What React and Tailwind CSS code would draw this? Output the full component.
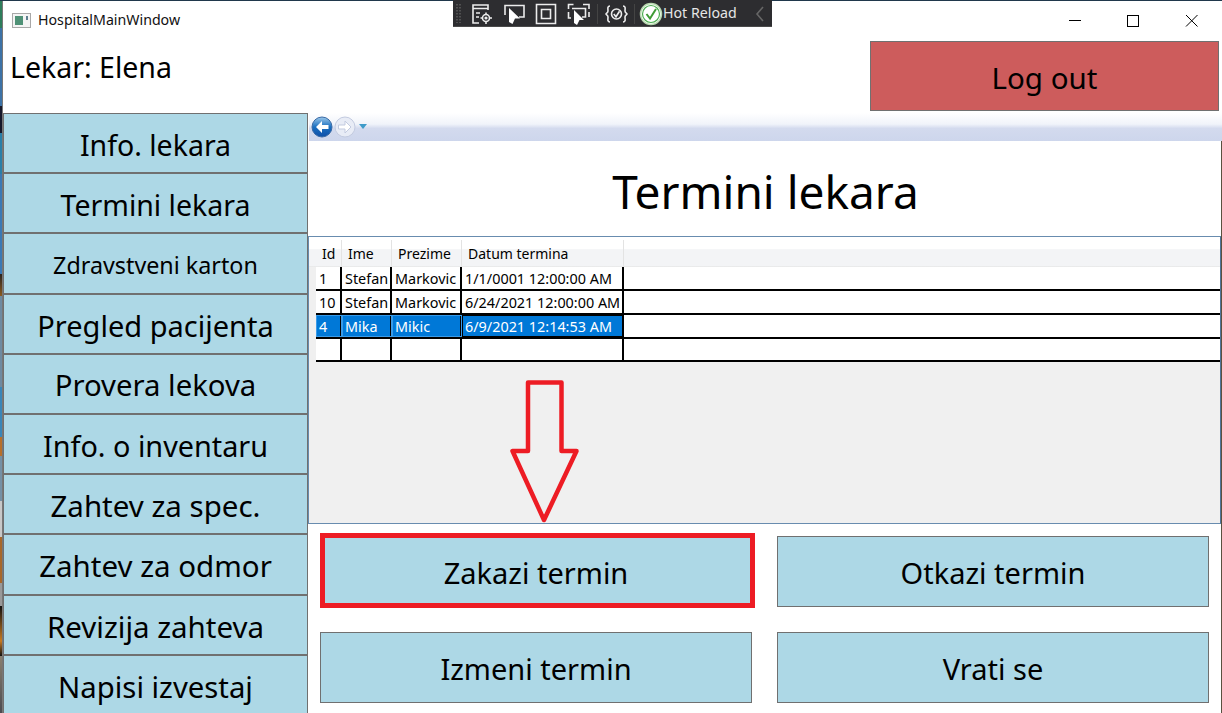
const FONT = "font-['Noto_Sans',sans-serif]";

const sideItems = [
  ["Info. lekara", "text-[28.5px]", "h-[59px]"],
  ["Termini lekara", "text-[28.500px]", "h-[60px]"],
  ["Zdravstveni karton", "text-[23.300px]", "h-[61px]"],
  ["Pregled pacijenta", "text-[29px]", "h-[60px]"],
  ["Provera lekova", "text-[29.300px]", "h-[60px]"],
  ["Info. o inventaru", "text-[28.800px]", "h-[60px]"],
  ["Zahtev za spec.", "text-[29.500px]", "h-[60px]"],
  ["Zahtev za odmor", "text-[29.500px]", "h-[61px]"],
  ["Revizija zahteva", "text-[29.500px]", "h-[60px]"],
  ["Napisi izvestaj", "text-[29.300px]", "h-[62px]"],
];

const rows = [
  ["1", "Stefan", "Markovic", "1/1/0001 12:00:00 AM"],
  ["10", "Stefan", "Markovic", "6/24/2021 12:00:00 AM"],
  ["4", "Mika", "Mikic", "6/9/2021 12:14:53 AM", true],
  ["", "", "", ""],
];

const colW = ["w-[26px]", "w-[50px]", "w-[70px]", "w-[162px]"];

function Toolbar() {
  return (
    <div className="absolute left-[453px] top-0 w-[319px] h-[27px] bg-[#2d2d30] border-b border-[#4a4a4a] flex items-center text-[#e6e6e6]">
      <svg width="319" height="27" viewBox="0 0 319 27" className="absolute left-0 top-0" fill="none" stroke="#ececec" strokeWidth="1.600">
        <path d="M4 4v19M7 4v19" stroke="#5c5c5c" strokeWidth="1.500" strokeDasharray="1.500 1.500" />
        <path d="M20 13V5h15v5M20 8.500h15M20 13v10h6M23 13h4M23 17h3" />
        <circle cx="33" cy="18" r="3.500" /><circle cx="33" cy="18" r="0.800" fill="#ececec" />
        <path d="M33 12.500v2M33 21.500v2.500M27.500 18h2M36.500 18h2.500" />
        <path d="M52 15V5.500h19V17h-5" />
        <path d="M56 8L67 18.500H62L59.500 24L56 22Z" fill="#fff" stroke="none" />
        <path d="M83.500 4.500h19v19h-19z" /><path d="M88.500 9.500h9v9h-9z" />
        <path d="M115.500 9V4.500h5M130 4.500h6V9M115.500 12v6h2.500M136 12v5" />
        <path d="M119 8.500h13.500V17H129" />
        <path d="M121 10L131 20H126.500L124 25L121 23Z" fill="#fff" stroke="none" />
        <path d="M144.500 4v20M181.500 4v20" stroke="#444" strokeWidth="1" />
        <path d="M157 6c-3 0-2 3-2 5s-2 2-2 3 2 1 2 3-1 5 2 5M170 6c3 0 2 3 2 5s2 2 2 3-2 1-2 3 1 5-2 5" />
        <circle cx="163.500" cy="14" r="5" />
        <path d="M160.800 14l2.200 2.800 3.500-5.500" />
        <path d="M310 7l-6 7 6 7" stroke="#666" />
      </svg>
      <svg width="24" height="24" viewBox="0 0 24 24" className="absolute left-[186px] top-[2px]">
        <circle cx="12" cy="12" r="10.500" fill="#fff" stroke="#b9d9b0" strokeWidth="1.500" />
        <circle cx="12" cy="12" r="8.500" fill="#fff" stroke="#4caf50" strokeWidth="1.200" />
        <path d="M7.500 12l3.500 4.500 6-9.500" fill="none" stroke="#3f9b35" strokeWidth="2" />
      </svg>
      <span className="absolute left-[210px] top-[3px] text-[14.200px] leading-[20px] whitespace-nowrap">Hot Reload</span>
    </div>
  );
}

function ActionButton({ children }) {
  return (
    <button className="w-[432px] h-[71px] pt-[2px] bg-[#add8e6] border border-[#707070] text-[29px] text-black flex items-center justify-center">
      {children}
    </button>
  );
}

export default function App() {
  return (
    <div className={`${FONT} relative w-[1222px] h-[713px] overflow-hidden bg-white text-black flex flex-col`}>
      <div className="h-px bg-[#20384c] shrink-0" />
      <div className="flex flex-1 min-h-0">
        <div className="w-[3px] shrink-0 border-r border-[#777] bg-[linear-gradient(to_bottom,#2e7d5b_0,#2e7d5b_27px,#3d72a6_27px,#3d72a6_105px,#15182a_105px,#15182a_132px,#2a7fa8_132px,#2a7fa8_173px,#3b79b5_173px,#3b79b5_273px,#2a2420_273px,#8a5a20_295px,#6f8aa0_295px,#6f8aa0_386px,#3a86b8_386px,#3a86b8_436px,#b8702a_436px,#b8702a_455px,#7590a5_455px,#7590a5_500px,#c8c8c8_500px,#c8c8c8_536px,#a8682a_536px,#a8682a_582px,#999999_582px,#999999_605px,#111111_605px,#c87a20_640px,#111111_655px,#8a8070_655px,#4a4a50_713px)]" />
        <div className="flex-1 min-w-0 flex flex-col">
          <div className="h-[39px] shrink-0 flex items-center">
            <svg width="20" height="16" viewBox="0 0 20 16" className="ml-[9px] mr-[6px]">
              <rect x="0.500" y="0.500" width="18" height="14" fill="#f4f4f4" stroke="#a8a8a8" />
              <rect x="3" y="3" width="8" height="9" fill="#4f9176" />
              <rect x="14" y="3" width="2" height="4" fill="#5f7f90" />
            </svg>
            <span className="text-[14.200px] leading-none text-[#111]">HospitalMainWindow</span>
            <div className="ml-auto flex items-center text-black -mt-[2px]">
              <svg width="58" height="30" viewBox="0 0 58 30"><path d="M11 15.500h12" stroke="#000" /></svg>
              <svg width="58" height="30" viewBox="0 0 58 30"><rect x="11.500" y="10.500" width="11" height="11" fill="none" stroke="#000" /></svg>
              <svg width="48" height="30" viewBox="0 0 48 30"><path d="M12 10l11.500 11.500M23.500 10L12 21.500" stroke="#000" /></svg>
            </div>
          </div>
          <div className="h-[73px] shrink-0 flex items-start justify-between">
            <span className="ml-[7px] mt-[7px] text-[28.500px] leading-[40px]">Lekar: Elena</span>
            <button className="mt-px mr-[3px] w-[349px] h-[70px] pt-[4px] bg-[#cd5c5c] border border-[#707070] text-[29.500px] flex items-center justify-center">
              Log out
            </button>
          </div>
          <div className="flex flex-1 min-h-0">
            <div className="w-[305px] shrink-0 flex flex-col">
              {sideItems.map(([label, size, h]) => (
                <button key={label} className={`${h} ${size} shrink-0 pt-[4px] bg-[#add8e6] border border-[#707070] border-b-0 border-t-2 first:border-t flex items-center justify-center whitespace-nowrap`}>
                  {label}
                </button>
              ))}
            </div>
            <div className="flex-1 min-w-0 flex flex-col pl-[1px]">
              <div className="h-[28px] shrink-0 bg-[linear-gradient(to_bottom,#ffffff_0%,#f0f3fa_40%,#d3daee_55%,#cdd6ec_100%)] flex items-center pl-[2px] gap-px">
                <svg width="22" height="22" viewBox="0 0 22 22">
                  <defs>
                    <linearGradient id="back" x1="0" y1="0" x2="0" y2="1">
                      <stop offset="0" stopColor="#9cc8ea" />
                      <stop offset="0.5" stopColor="#1a6fc0" />
                      <stop offset="1" stopColor="#0f4fa8" />
                    </linearGradient>
                  </defs>
                  <circle cx="11" cy="11" r="10" fill="url(#back)" stroke="#3a6aa5" />
                  <path d="M11 5l-6 6 6 6v-4h6.500V9H11z" fill="#fff" />
                </svg>
                <svg width="22" height="22" viewBox="0 0 22 22">
                  <circle cx="11" cy="11" r="10" fill="#e8ecf6" stroke="#c3cbe0" />
                  <path d="M11 5l6 6-6 6v-4H4.500V9H11z" fill="#fff" stroke="#c3cbe0" />
                </svg>
                <svg width="10" height="6" viewBox="0 0 10 6" className="ml-[1px]"><path d="M1 0h8L5 5z" fill="#3f9bc9" /></svg>
              </div>
              <div className="flex-1 min-h-0 flex flex-col border-r border-[#5a5040]">
                <div className="h-[95px] shrink-0 flex items-center justify-center text-[46px] leading-none pt-[4px] pl-[1px]">
                  Termini lekara
                </div>
                <div className="h-[288px] shrink-0 -ml-px border border-[#688caf] border-r-[#4f7399] bg-[#f0f0f0] pl-[7px] text-[14.400px]">
                  <div className="flex h-[30px] pt-[3px] text-[14px] bg-[linear-gradient(to_bottom,#ffffff_0%,#ffffff_40%,#f3f4f6_42%,#f3f4f6_96%,#e3e3e3_100%)] -ml-[7px] pl-[7px]">
                    {["Id", "Ime", "Prezime", "Datum termina"].map((t, i) => (
                      <div key={t} className={`${colW[i]} shrink-0 border-r border-[#e3e3e3] flex items-center px-[6px] whitespace-nowrap`}>{t}</div>
                    ))}
                    <div className="flex-1" />
                  </div>
                  <div className="bg-white">
                    {rows.map((r, idx) => (
                      <div key={idx} className={`flex border-b-2 border-black ${idx === 3 ? "h-[23px]" : "h-[24px]"}`}>
                        {r.slice(0, 4).map((c, i) => {
                          const sel = r[4];
                          return (
                            <div key={i} className={`${colW[i]} shrink-0 border-r-2 border-black flex items-center px-[2px] pt-[2px] whitespace-nowrap overflow-hidden ${sel ? "bg-[#0078d7] text-white outline -outline-offset-1" : ""} ${sel && i === 3 ? "outline-black" : "outline-[#3a9be8]"}`}>
                              <span className="pl-px">{c}</span>
                            </div>
                          );
                        })}
                        <div className="flex-1" />
                      </div>
                    ))}
                  </div>
                </div>
                <div className="flex-1 min-h-0 grid grid-cols-[432px_432px] gap-x-[25px] gap-y-[25px] pl-[11px] pt-[12px] content-start">
                  <ActionButton>Zakazi termin</ActionButton>
                  <ActionButton>Otkazi termin</ActionButton>
                  <ActionButton>Izmeni termin</ActionButton>
                  <ActionButton>Vrati se</ActionButton>
                </div>
              </div>
            </div>
          </div>
        </div>
      </div>

      <Toolbar />

      <svg width="1222" height="713" viewBox="0 0 1222 713" className="absolute left-0 top-0 pointer-events-none" fill="none" stroke="#ed1c24">
        <path d="M528 382.500H561.500V451H576.500L544 520L512.500 451H528Z" strokeWidth="4.500" strokeLinejoin="round" />
        <rect x="322.500" y="535.500" width="430" height="70" strokeWidth="5" />
      </svg>
    </div>
  );
}
